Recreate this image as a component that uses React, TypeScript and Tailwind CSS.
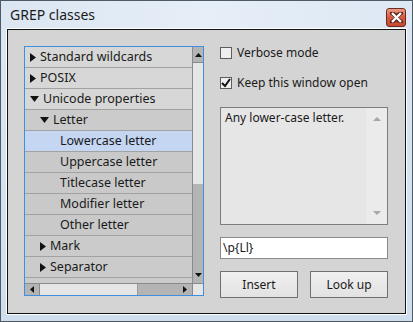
import React from "react";

const Right = () => (
  <svg width="6" height="9" viewBox="0 0 6 9" className="shrink-0"><path d="M0 0 L6 4.5 L0 9 Z" fill="#111" /></svg>
);
const Down = () => (
  <svg width="9" height="6" viewBox="0 0 9 6" className="shrink-0"><path d="M0 0 L9 0 L4.5 6 Z" fill="#111" /></svg>
);

type Row = { label: string; level: number; arrow?: "r" | "d"; sel?: boolean };
const rows: Row[] = [
  { label: "Standard wildcards", level: 0, arrow: "r" },
  { label: "POSIX", level: 0, arrow: "r" },
  { label: "Unicode properties", level: 0, arrow: "d" },
  { label: "Letter", level: 1, arrow: "d" },
  { label: "Lowercase letter", level: 2, sel: true },
  { label: "Uppercase letter", level: 2 },
  { label: "Titlecase letter", level: 2 },
  { label: "Modifier letter", level: 2 },
  { label: "Other letter", level: 2 },
  { label: "Mark", level: 1, arrow: "r" },
  { label: "Separator", level: 1, arrow: "r" },
  { label: "", level: 1 },
];

function ListRow({ r }: { r: Row }) {
  const bg = r.sel ? "bg-[#c4d6f2]" : r.level === 0 ? "bg-[#d7d7d7]" : r.level === 1 ? "bg-[#cbcbcb]" : "bg-[#c9c9c9]";
  const pad = r.level === 0 ? "pl-[5px]" : r.level === 1 ? "pl-[15px]" : "pl-[35px]";
  return (
    <div className={`h-[21px] shrink-0 border-b border-[#a2a2a2] flex items-center gap-[4px] ${bg} ${pad}`}>
      {r.arrow === "r" && <Right />}
      {r.arrow === "d" && <Down />}
      <span className="text-[12.5px] leading-none text-[#1a1a1a] whitespace-nowrap">{r.label}</span>
    </div>
  );
}

function CheckBox({ checked, label }: { checked: boolean; label: string }) {
  return (
    <div className="h-[14px] flex items-center gap-[5px]">
      <div className="w-[12px] h-[12px] border border-[#5d5d5d] bg-[#efefef] flex items-center justify-center">
        {checked && (
          <svg width="10" height="10" viewBox="0 0 10 10"><path d="M1 5 L4 8 L9 1" fill="none" stroke="#111" strokeWidth="2" /></svg>
        )}
      </div>
      <span className="text-[12px] leading-none text-[#1a1a1a]">{label}</span>
    </div>
  );
}

export default function App() {
  return (
    <div
      className="w-[413px] h-[322px] border border-[#4e5a66] flex flex-col"
      style={{ fontFamily: "'Noto Sans', 'Open Sans', sans-serif" }}
    >
      <div className="flex-1 flex flex-col bg-gradient-to-b from-[#dbe6f3] to-[#cfdeee]">
        {/* title bar */}
        <div className="h-[27px] flex items-center justify-between pl-[9px] pr-[6px] bg-gradient-to-r from-[#dbe6f2] via-[#e6eef7] to-[#dde8f4]">
          <span className="text-[14px] leading-none text-[#1b1b1b] mt-[1px]">GREP classes</span>
          <div className="w-[20px] h-[19px] mt-[5px] rounded-[3px] border border-[#6e2a1e] bg-gradient-to-b from-[#e99b86] via-[#d15a3f] to-[#c44a30] flex items-center justify-center">
            <svg width="13" height="11" viewBox="0 0 13 11">
              <path d="M2 1 L6.5 4.3 L11 1 M2 10 L6.5 6.7 L11 10" fill="none" stroke="#5a2418" strokeWidth="4.2" strokeLinecap="square" />
              <path d="M2 1 L11 10 M11 1 L2 10" fill="none" stroke="#fff" strokeWidth="2.4" />
            </svg>
          </div>
        </div>
        {/* client area */}
        <div className="ml-[5px] mr-[5px] mb-[6px] flex-1 border border-white flex">
          <div className="flex-1 border border-[#111] bg-[#d4d4d4] flex pt-[16px] pl-[16px] gap-[16px]">
            {/* listbox */}
            <div className="w-[180px] h-[250px] border border-[#3d8fe0] flex flex-col">
              <div className="flex flex-1 min-h-0">
                <div className="flex-1 flex flex-col overflow-hidden">
                  {rows.map((r, i) => (
                    <ListRow key={i} r={r} />
                  ))}
                </div>
                <div className="w-[11px] flex flex-col border-l border-[#8a8a8a]">
                  <div className="h-[16px] bg-[#b4b4b4] border-b border-[#8a8a8a] flex items-center justify-center">
                    <svg width="7" height="4" viewBox="0 0 7 4"><path d="M0 4 L3.5 0 L7 4 Z" fill="#111" /></svg>
                  </div>
                  <div className="h-[121px] bg-[#e6e6e6]" />
                  <div className="flex-1 bg-[#b4b4b4] flex items-end justify-center pb-[6px]">
                    <svg width="7" height="4" viewBox="0 0 7 4"><path d="M0 0 L3.5 4 L7 0 Z" fill="#111" /></svg>
                  </div>
                </div>
              </div>
              <div className="h-[12px] flex border-t border-[#8a8a8a]">
                <div className="w-[15px] bg-[#b4b4b4] border-r border-[#8a8a8a] flex items-center justify-center">
                  <svg width="4" height="7" viewBox="0 0 4 7"><path d="M4 0 L0 3.5 L4 7 Z" fill="#111" /></svg>
                </div>
                <div className="w-[97px] bg-[#e6e6e6]" />
                <div className="flex-1 bg-[#b4b4b4] flex items-center justify-end pr-[5px] border-l border-[#9a9a9a]">
                  <svg width="4" height="7" viewBox="0 0 4 7"><path d="M0 0 L4 3.5 L0 7 Z" fill="#111" /></svg>
                </div>
                <div className="w-[11px] bg-[#e6e6e6] border-l border-[#8a8a8a]" />
              </div>
            </div>
            {/* right column */}
            <div className="w-[168px] flex flex-col">
              <CheckBox checked={false} label="Verbose mode" />
              <div className="h-[16px]" />
              <CheckBox checked={true} label="Keep this window open" />
              <div className="h-[17px]" />
              <div className="h-[118px] border border-[#7c7c7c] bg-[#e6e6e6] flex">
                <div className="flex-1 pl-[4px] pt-[3px] text-[12px] leading-[14px] text-[#1a1a1a]">Any lower-case letter.</div>
                <div className="w-[21px] bg-[#ebebeb] flex flex-col items-center justify-between pt-[9px] pb-[9px]">
                  <svg width="8" height="4" viewBox="0 0 8 4"><path d="M0 4 L4 0 L8 4 Z" fill="#a6a6a6" /></svg>
                  <svg width="8" height="4" viewBox="0 0 8 4"><path d="M0 0 L4 4 L8 0 Z" fill="#a6a6a6" /></svg>
                </div>
              </div>
              <div className="h-[12px]" />
              <div className="h-[22px] border border-[#8a8a8a] bg-white flex items-center pl-[2px]">
                <span className="text-[12px] leading-none text-[#1a1a1a]">\p{"{"}Ll{"}"}</span>
              </div>
              <div className="h-[12px]" />
              <div className="flex gap-[12px]">
                <div className="w-[78px] h-[27px] border border-[#707070] bg-gradient-to-b from-[#f0f0f0] to-[#e2e2e2] flex items-center justify-center text-[12px] text-[#1a1a1a]">Insert</div>
                <div className="w-[78px] h-[27px] border border-[#707070] bg-gradient-to-b from-[#f0f0f0] to-[#e2e2e2] flex items-center justify-center text-[12px] text-[#1a1a1a]">Look up</div>
              </div>
            </div>
          </div>
        </div>
      </div>
    </div>
  );
}
